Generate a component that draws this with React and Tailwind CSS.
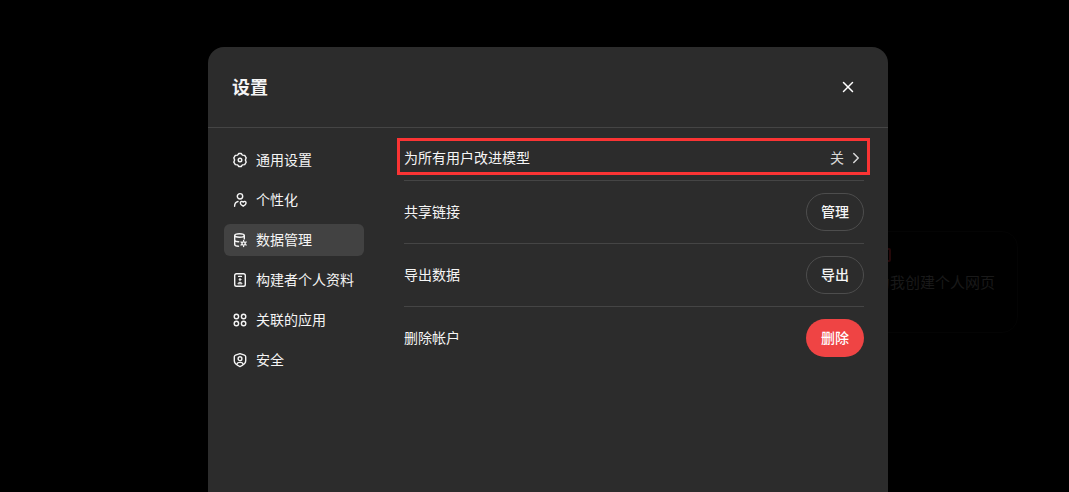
import { useState } from 'react';
import { ChevronRight, X } from 'lucide-react';

export default function App() {
    const [active, setActive] = useState('data');
    return (<div className="relative h-screen overflow-hidden bg-black pt-[47px] pl-[27px] text-sm text-[#f5f5f5] font-['Noto_Sans','Noto_Sans_CJK_SC',sans-serif]">
      <Backdrop />
      <div role="dialog" aria-labelledby="settings-title" className="relative mx-auto flex h-full max-w-[680px] flex-col rounded-t-2xl bg-[#2c2c2c]">
        <header className="flex items-center justify-between border-b border-[#454545] p-6">
          <h2 id="settings-title" className="text-lg leading-8 font-bold">设置</h2>
          <button type="button" aria-label="关闭" className="flex size-8 items-center justify-center text-white">
            <X size={18} strokeWidth={2}/>
          </button>
        </header>

        <div className="flex flex-1 gap-10 px-6">
          <nav className="-ml-2 flex w-[140px] shrink-0 flex-col gap-2 pt-4">
            {sections.map(section => (<button key={section.id} type="button" onClick={() => setActive(section.id)} aria-current={active === section.id ? 'page' : undefined} className={active === section.id
                ? 'flex h-8 items-center gap-2 rounded-md bg-[#424242] px-2 whitespace-nowrap'
                : 'flex h-8 items-center gap-2 rounded-md px-2 whitespace-nowrap'}>
                <svg className="size-4 shrink-0" viewBox="0 0 16 16" fill="none" stroke="currentColor" strokeWidth="1.4" strokeLinecap="round" strokeLinejoin="round" aria-hidden="true">
                  {section.icon}
                </svg>
                {section.name}
              </button>))}
          </nav>

          <main className="min-w-0 flex-1 pt-[10px]">
            <div className="border-b border-[#454545] pb-[5px]">
              <button type="button" className="-mx-[7px] flex h-[37px] w-[calc(100%+13px)] items-center justify-between border-3 border-[#fa3434] pt-0.5 pr-0.5 pl-1">
                <span>为所有用户改进模型</span>
                <span className="flex items-center gap-[3px] text-[#d8d8d8]">
                  关
                  <ChevronRight size={18} strokeWidth={2}/>
                </span>
              </button>
            </div>
            {actions.map(action => (<div key={action.name} className="flex items-center justify-between border-b border-[#454545] py-3 last:border-b-0">
                <span>{action.name}</span>
                <button type="button" className={action.danger
                ? 'h-[38px] w-[58px] rounded-full bg-[#ef4444] font-medium text-white'
                : 'h-[38px] w-[58px] rounded-full border border-[#4d4d4d] font-medium'}>
                  {action.label}
                </button>
              </div>))}
          </main>
        </div>
      </div>
    </div>);
}

// Dimmed chat page behind the dialog
function Backdrop() {
    return (<div className="absolute inset-0 flex items-center justify-end pt-[72px] pr-[51px]" aria-hidden="true">
      <div className="h-[102px] w-[160px] rounded-2xl border border-[#040404] px-4 pt-4 text-[#191919]">
        <div className="mb-2 h-3.5 w-4 rounded-xs border-2 border-[#250809]"></div>
        <div className="text-[15px] leading-6 whitespace-nowrap">为我创建个人网页</div>
      </div>
    </div>);
}

const sections = [
    {
        id: 'general',
        name: '通用设置',
        icon: <>
          <path d="M6.8 1.5h2.4l1.2 1.6 2.3.3 1.5 2.4L13.4 8l.8 2.2-1.5 2.4-2.3.3-1.2 1.6H6.8l-1.2-1.6-2.3-.3-1.5-2.4L2.6 8l-.8-2.2 1.5-2.4 2.3-.3z"/>
          <circle cx="8" cy="8" r="1.8"/>
        </>
    },
    {
        id: 'personalization',
        name: '个性化',
        icon: <>
          <circle cx="8" cy="4.3" r="2.7"/>
          <path d="M2.6 14.2c0-2.6 1.3-4.2 3.4-4.7"/>
          <path d="M11.2 14.2c-1.8-1-2.9-2-2.9-3.2 0-1.7 2-2.1 2.9-.8.9-1.3 2.9-.9 2.9.8 0 1.2-1.1 2.2-2.9 3.2z"/>
        </>
    },
    {
        id: 'data',
        name: '数据管理',
        icon: <>
          <ellipse cx="7.5" cy="3.5" rx="4.8" ry="1.8"/>
          <path d="M2.7 3.5v9c0 1 1.6 1.7 3.8 1.8M12.3 3.5v3.4M2.7 8c0 1 1.6 1.7 4 1.8"/>
          <circle cx="11.6" cy="11.5" r="1.6"/>
          <path strokeWidth="1.3" d="M11.6 9.2v-.7M11.6 14.5v-.7M13.6 10.3l.6-.3M9 13l.6-.3M13.6 12.7l.6.3M9 10l.6.3"/>
        </>
    },
    {
        id: 'builder',
        name: '构建者个人资料',
        icon: <>
          <rect x="2.7" y="1.7" width="10.6" height="12.6" rx="1.8"/>
          <path d="M6.6 4.4h2.8"/>
          <circle cx="8" cy="7.5" r="1" fill="currentColor" strokeWidth="0.6"/>
          <path d="M6 11.5c.4-1.8 3.6-1.8 4 0z" fill="currentColor" strokeWidth="0.8"/>
        </>
    },
    {
        id: 'apps',
        name: '关联的应用',
        icon: <>
          <circle cx="4.4" cy="4.5" r="2.2"/>
          <circle cx="11.6" cy="4.5" r="2.2"/>
          <circle cx="4.4" cy="11.5" r="2.2"/>
          <circle cx="11.6" cy="11.5" r="2.2"/>
        </>
    },
    {
        id: 'security',
        name: '安全',
        icon: <>
          <path d="M8 1.6l4.5 1.5c.8.3 1.2.8 1.2 1.6v4.1c0 2.8-2.5 4.5-5.7 5.8-3.2-1.3-5.7-3-5.7-5.8V4.7c0-.8.4-1.3 1.2-1.6z"/>
          <circle cx="8" cy="6.7" r="1.9"/>
          <path d="M4.8 12.2c.8-2.4 5.6-2.4 6.4 0"/>
        </>
    }
];
const actions = [
    { name: '共享链接', label: '管理' },
    { name: '导出数据', label: '导出' },
    { name: '删除帐户', label: '删除', danger: true }
];
